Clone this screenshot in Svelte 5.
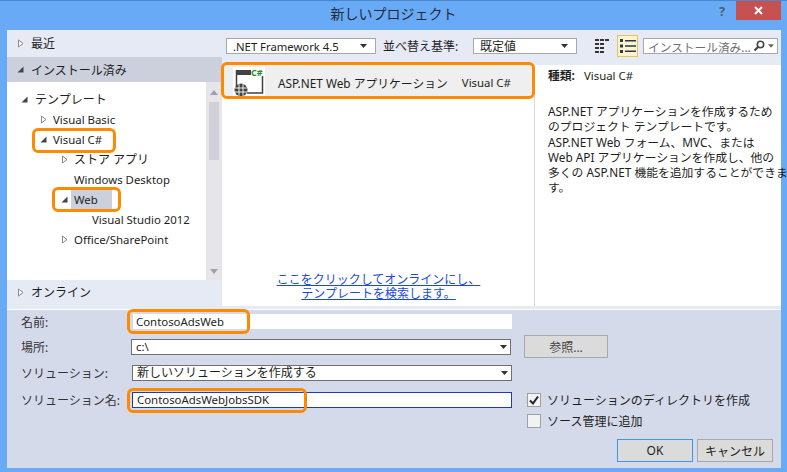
<script>
  const tree = [
    { label: 'テンプレート', depth: 0, arrow: 'open' },
    { label: 'Visual Basic', depth: 1, arrow: 'closed' },
    { label: 'Visual C#', depth: 1, arrow: 'open' },
    { label: 'ストア アプリ', depth: 2, arrow: 'closed' },
    { label: 'Windows Desktop', depth: 2, arrow: '' },
    { label: 'Web', depth: 2, arrow: 'open', selected: true },
    { label: 'Visual Studio 2012', depth: 3, arrow: '' },
    { label: 'Office/SharePoint', depth: 2, arrow: 'closed' }
  ];
  const isLatin = (s) => /^[\x00-\x7f]+$/.test(s);
</script>

{#snippet arrow(kind)}
  {#if kind === 'open'}
    <svg class="arrow" viewBox="0 0 9 9"><path d="M1.5 7.5 L7.5 7.5 L7.5 1.5 Z" fill="#444" /></svg>
  {:else if kind === 'closed'}
    <svg class="arrow" viewBox="0 0 9 9"><path d="M2.5 1 L7 4.5 L2.5 8 Z" fill="#fff" stroke="#888" /></svg>
  {:else}
    <span class="arrow"></span>
  {/if}
{/snippet}

{#snippet caret()}
  <svg class="caret" viewBox="0 0 7 4"><path d="M0 0 H7 L3.5 4 Z" fill="#333" /></svg>
{/snippet}

<div class="window">
  <header class="titlebar">
    <h1>新しいプロジェクト</h1>
    <span class="help">?</span>
    <span class="close">
      <svg viewBox="0 0 9 9" width="9" height="9"><path d="M1 1 L8 8 M8 1 L1 8" stroke="#fff" stroke-width="2" /></svg>
    </span>
  </header>

  <div class="body">
    <div class="upper">
      <aside class="side">
        <div class="cat recent">{@render arrow('closed')}<span>最近</span></div>
        <div class="cat installed">{@render arrow('open')}<span>インストール済み</span></div>
        <div class="treewrap">
          <ul class="tree">
            {#each tree as t}
              <li class="d{t.depth}" class:latin={isLatin(t.label)}>
                {@render arrow(t.arrow)}<span class:sel={t.selected}>{t.label}</span>
              </li>
            {/each}
          </ul>
          <div class="scroll">
            <svg viewBox="0 0 8 5" class="sa"><path d="M0 5 L4 0 L8 5 Z" fill="#a0a0a8" /></svg>
            <div class="thumb"></div>
            <svg viewBox="0 0 8 5" class="sa"><path d="M0 0 L8 0 L4 5 Z" fill="#a0a0a8" /></svg>
          </div>
        </div>
        <div class="cat online">{@render arrow('closed')}<span>オンライン</span></div>
      </aside>

      <section class="main">
        <div class="toolbar">
          <div class="select fw"><span>.NET Framework 4.5</span>{@render caret()}</div>
          <span class="sortlabel">並べ替え基準:</span>
          <div class="select sort"><span>既定値</span>{@render caret()}</div>
          <svg class="viewbtn" viewBox="0 0 14 14">
            <path d="M0 0h4v2H0zM5 0h4v2H5zM10 0h4v2h-4zM0 4h4v2H0zM5 4h4v2H5zM0 8h4v2H0zM5 8h4v2H5zM0 12h4v2H0zM5 12h4v2H5z" fill="#333" />
          </svg>
          <div class="viewon">
            <svg viewBox="0 0 16 14" width="16" height="14">
              <path d="M0 0h3v3H0zM5 1h11v1.4H5zM0 5.5h3v3H0zM5 6.3h11v1.4H5zM0 11h3v3H0zM5 11.6h11v1.4H5z" fill="#2a3a4c" />
            </svg>
          </div>
          <div class="search">
            <span class="ph">インストール済み...</span>
            <svg viewBox="0 0 12 12" width="12" height="12">
              <circle cx="7.5" cy="4.5" r="3.2" fill="none" stroke="#444" stroke-width="1.6" />
              <path d="M5 7 L1.5 10.5" stroke="#444" stroke-width="2.2" />
            </svg>
            <svg class="scar" viewBox="0 0 7 4"><path d="M0 0 H7 L3.5 4 Z" fill="#666" /></svg>
          </div>
        </div>
        <div class="content">
          <div class="list">
            <div class="item">
              <svg class="ticon" viewBox="0 0 32 30" width="32" height="30">
                <rect width="32" height="30" fill="#fff" />
                <path d="M3 3h15v5H3z" fill="#424242" />
                <path d="M3.500 3v17M29.500 9v17H14" fill="none" stroke="#424242" stroke-width="1.500" />
                <circle cx="8" cy="23" r="6.500" fill="#424242" />
                <path d="M2 21h12M2 25h12M6 17v12M10 17v12" stroke="#fff" stroke-width="0.900" />
                <text x="18" y="8.500" class="cs">C#</text>
              </svg>
              <span class="iname">ASP.NET Web アプリケーション</span>
              <span class="ilang">Visual C#</span>
            </div>
            <a class="onlinelink" href="#top">ここをクリックしてオンラインにし、<br />テンプレートを検索します。</a>
          </div>
          <div class="detail">
            <p class="kind"><b>種類:</b><span class="kv">Visual C#</span></p>
            <p>ASP.NET アプリケーションを作成するため<br />のプロジェクト テンプレートです。<br />ASP.NET Web フォーム、MVC、または<br />Web API アプリケーションを作成し、他の<br />多くの ASP.NET 機能を追加することができま<br />す。</p>
          </div>
        </div>
      </section>
    </div>

    <div class="form">
      <div class="fields">
        <div class="row"><span class="lab">名前:</span><div class="input plain latin">ContosoAdsWeb</div></div>
        <div class="row"><span class="lab">場所:</span><div class="input loc latin">c:\{@render caret()}</div></div>
        <div class="row"><span class="lab">ソリューション:</span><div class="input sol">新しいソリューションを作成する{@render caret()}</div></div>
        <div class="row"><span class="lab">ソリューション名:</span><div class="input focus latin">ContosoAdsWebJobsSDK</div></div>
      </div>
      <div class="aside">
        <button class="btn browse">参照...</button>
        <div class="checks">
          <div class="check">
            <span class="box"><svg viewBox="0 0 12 12" width="12" height="12"><path d="M2 6.500 L5 9.500 L10 2.500" fill="none" stroke="#222" stroke-width="2" /></svg></span>
            ソリューションのディレクトリを作成
          </div>
          <div class="check"><span class="box"></span>ソース管理に追加</div>
        </div>
        <div class="actions">
          <button class="btn ok">OK</button>
          <button class="btn">キャンセル</button>
        </div>
      </div>
    </div>
  </div>

  <span class="hl h-item"></span>
  <span class="hl h-cs"></span>
  <span class="hl h-web"></span>
  <span class="hl h-name"></span>
  <span class="hl h-sol"></span>
</div>

<style>
  :global(body) { margin: 0; }
  .window {
    position: relative;
    width: 787px;
    height: 472px;
    box-sizing: border-box;
    background: #68aaf5;
    border-top: 1px solid #4a86cc;
    display: flex;
    flex-direction: column;
    overflow: hidden;
    font-family: "Noto Sans", "Noto Sans CJK JP", sans-serif;
    font-size: 12px;
    color: #1e1e1e;
  }
  .titlebar {
    height: 29px;
    flex: none;
    display: flex;
    align-items: flex-start;
    justify-content: flex-end;
    position: relative;
  }
  h1 {
    position: absolute;
    left: 0;
    right: 0;
    top: 1px;
    margin: 0;
    text-align: center;
    font-size: 14px;
    font-weight: 400;
    line-height: 24px;
    color: #222c38;
  }
  .help { width: 14px; margin: 2px 7px 0 0; font-weight: 700; color: #4a5c70; font-size: 12px; line-height: 18px; text-align: center; }
  .close { width: 45px; height: 19px; margin-right: 6px; background: #c75050; display: flex; align-items: center; justify-content: center; }
  .body { margin: 0 6px 0 7px; height: 438px; display: flex; flex-direction: column; flex: none; }
  .upper { height: 279px; flex: none; display: flex; background: #e6eaf5; }
  .side { width: 215px; flex: none; display: flex; flex-direction: column; }
  .arrow { width: 9px; height: 9px; flex: none; display: inline-block; }
  .cat { display: flex; align-items: center; gap: 6px; padding-left: 9px; box-sizing: border-box; }
  .recent { height: 27px; padding-bottom: 1px; }
  .installed { height: 25px; background: #ccd0dc; }
  .online { height: 29px; width: 219px; padding-bottom: 5px; position: relative; }
  .treewrap { height: 198px; flex: none; display: flex; background: #fff; }
  .tree { flex: 1; margin: 0; padding: 7px 0 0; list-style: none; }
  .tree li { height: 20px; display: flex; align-items: center; gap: 5px; white-space: nowrap; }
  .tree li.latin { font-size: 11.400px; }
  .d0 { padding-left: 13px; gap: 6px !important; }
  .d1 { padding-left: 32px; }
  .d2 { padding-left: 53px; }
  .d3 { padding-left: 85px; }
  .d3 .arrow { display: none; }
  .sel { background: #ccd0dc; padding: 0 14px 0 3px; margin-left: -3px; height: 19px; line-height: 19px; }
  .scroll { width: 16px; background: #e6e6ea; display: flex; flex-direction: column; align-items: center; padding-top: 8px; box-sizing: border-box; }
  .sa { width: 8px; height: 5px; flex: none; }
  .thumb { width: 10px; height: 58px; background: #d0d0d6; margin: 7px 0 109px; flex: none; }
  .main { flex: 1; min-width: 0; display: flex; flex-direction: column; }
  .toolbar { height: 35px; flex: none; display: flex; align-items: center; padding: 0 0 3px 4px; box-sizing: border-box; }
  .select {
    height: 16px;
    box-sizing: border-box;
    background: #fff;
    border: 1px solid #a8a8a8;
    display: flex;
    align-items: center;
    justify-content: space-between;
    padding: 0 8px 0 6px;
  }
  .fw { width: 150px; font-size: 11.300px; }
  .caret { width: 7px; height: 4px; flex: none; }
  .sortlabel { margin-left: 7px; width: 90px; flex: none; white-space: nowrap; }
  .sort { width: 104px; }
  .viewbtn { width: 14px; height: 14px; margin-left: 18px; flex: none; }
  .viewon { width: 21px; height: 22px; margin-left: 8px; box-sizing: border-box; background: #fdf3cd; border: 1px solid #e5c365; display: flex; align-items: center; justify-content: center; flex: none; }
  .search { width: 135px; height: 16px; margin-left: 5px; box-sizing: border-box; background: #fff; border: 1px solid #a8a8a8; display: flex; align-items: center; padding-left: 4px; color: #707070; overflow: hidden; font-size: 11.700px; }
  .ph { flex: 1; white-space: nowrap; min-width: 0; }
  .scar { width: 6px; height: 4px; margin: 0 3px 0 3px; flex: none; }
  .content { flex: 1; display: flex; min-height: 0; background: #fff; margin-bottom: 3px; }
  .list { width: 313px; flex: none; display: flex; flex-direction: column; padding-left: 1px; box-sizing: border-box; border-right: 1px solid #d8dae0; }
  .item { height: 31px; box-sizing: border-box; padding-top: 4px; background: #efefef; display: flex; align-items: center; white-space: nowrap; font-size: 11.800px; width: 311px; flex: none; }
  .ticon { margin: -4px 0 -2px 10px; flex: none; }
  .cs { font: 700 9px "Noto Sans", sans-serif; fill: #2e8b2e; }
  .iname { margin-left: 13px; }
  .ilang { margin-left: 14px; font-size: 11.400px; }
  .onlinelink { margin-top: auto; margin-bottom: 5px; text-align: center; color: #1a4bd8; line-height: 14px; }
  .detail { flex: 1; padding: 3px 0 0 13px; line-height: 15.200px; white-space: nowrap; font-size: 11.800px; }
  .detail p { margin: 0; }
  .kind { margin-bottom: 21px !important; }
  .kind b { font-weight: 700; }
  .kv { margin-left: 9px; font-size: 11.400px; }
  .form {
    height: 159px;
    flex: none;
    background: #d5daea;
    border-top: 1px solid #fff;
    display: flex;
    box-sizing: border-box;
  }
  .fields { width: 505px; flex: none; display: flex; flex-direction: column; padding-top: 4px; box-sizing: border-box; }
  .row { display: flex; align-items: center; height: 16px; margin-top: 10px; }
  .row:first-child { margin-top: 0; height: 15px; }
  .row:last-child { margin-top: 11px; }
  .lab { width: 124px; padding-left: 14px; box-sizing: border-box; flex: none; white-space: nowrap; color: #333; }
  .input { background: #fff; height: 16px; box-sizing: border-box; line-height: 14px; display: flex; align-items: center; justify-content: space-between; white-space: nowrap; padding: 0 3px 0 4px; width: 380px; flex: none; }
  .input.latin { font-size: 11.400px; }
  .plain { width: 379px; height: 15px; margin-left: 2px; padding-left: 3px; }
  .loc { border: 1px solid #707070; }
  .sol { border: 1px solid #707070; margin-left: 1px; }
  .focus { border: 1px solid #1a3cbc; margin-left: 1px; }
  .aside { flex: 1; display: flex; flex-direction: column; }
  .btn { width: 76px; height: 23px; padding: 0; background: #dbdbdb; border: 1px solid #a8a8a8; font: inherit; color: #222; }
  .browse { width: 84px; margin: 25px 0 0 12px; color: #444; }
  .checks { margin: 35px 0 0 15px; display: flex; flex-direction: column; gap: 7px; }
  .check { display: flex; align-items: center; gap: 6px; height: 14px; white-space: nowrap; }
  .box { width: 14px; height: 14px; box-sizing: border-box; border: 1px solid #a0a0a0; background: #f2f2f4; display: flex; align-items: center; justify-content: center; flex: none; }
  .actions { display: flex; gap: 4px; margin: 11px 8px 0 auto; }
  .ok { border-color: #3399ff; }
  .hl { position: absolute; border: 3px solid #fd8a00; border-radius: 6px; box-sizing: border-box; pointer-events: none; }
  .h-item { left: 221px; top: 61px; width: 314px; height: 37px; }
  .h-cs { left: 32px; top: 127px; width: 84px; height: 25px; }
  .h-web { left: 52px; top: 186px; width: 69px; height: 25px; }
  .h-name { left: 127px; top: 308px; width: 123px; height: 25px; }
  .h-sol { left: 127px; top: 387px; width: 180px; height: 25px; }
</style>
